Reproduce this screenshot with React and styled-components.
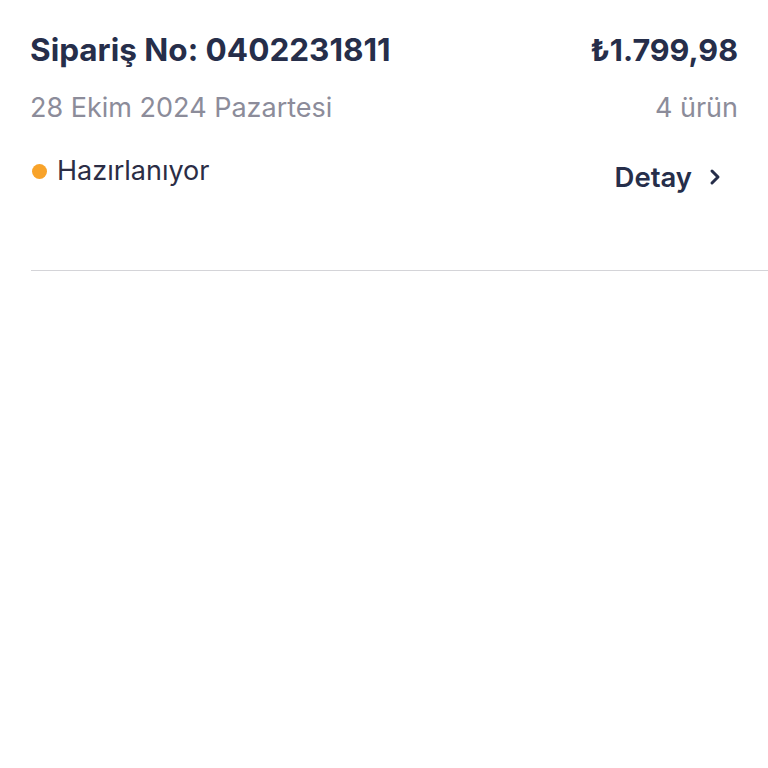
import React from 'react';
import styled, { createGlobalStyle } from 'styled-components';

const GlobalStyle = createGlobalStyle`
  body {
    margin: 0;
    background: #fff;
    font-family: Inter, "Noto Sans", sans-serif;
  }
`;

const Card = styled.div`
  padding: 28px 30px 0 30px;
`;

const Row = styled.div`
  display: flex;
  justify-content: space-between;
  align-items: center;
  margin-top: ${(p) => p.$mt || 0}px;
`;

const Title = styled.div`
  font-size: ${(p) => p.$size || 31.5}px;
  line-height: 44px;
  font-weight: 700;
  color: #262e4a;
`;

const SubText = styled.div`
  font-size: 27px;
  line-height: 36px;
  color: #8c8c9a;
`;

const Status = styled.div`
  display: flex;
  align-items: center;
  gap: 10px;
  font-size: 27px;
  line-height: 36px;
  color: #2b2d45;
`;

const Dot = styled.span`
  width: 15px;
  height: 15px;
  border-radius: 50%;
  background: #f8a32a;
  margin-left: 2px;
`;

const DetailLink = styled.button`
  display: flex;
  align-items: center;
  gap: 16px;
  border: none;
  background: none;
  padding: 0 16px 0 0;
  margin-top: 12px;
  font-family: inherit;
  font-size: 27.5px;
  font-weight: 600;
  color: #262e4a;
  cursor: pointer;
`;

const Divider = styled.hr`
  border: none;
  border-top: 1px solid #d4d4d8;
  margin: 76px -30px 0 1px;
`;

const Chevron = () => (
  <svg width="14" height="18" viewBox="0 0 14 18" fill="none">
    <path d="M4 3l6 6-6 6" stroke="#262e4a" strokeWidth="3" strokeLinecap="round" strokeLinejoin="round" />
  </svg>
);

export default function App() {
  return (
    <>
      <GlobalStyle />
      <Card>
        <Row>
          <Title>Sipariş No: 0402231811</Title>
          <Title $size={30.5}>₺1.799,98</Title>
        </Row>
        <Row $mt={18}>
          <SubText>28 Ekim 2024 Pazartesi</SubText>
          <SubText>4 ürün</SubText>
        </Row>
        <Row $mt={22}>
          <Status>
            <Dot />
            Hazırlanıyor
          </Status>
          <DetailLink>
            Detay
            <Chevron />
          </DetailLink>
        </Row>
        <Divider />
      </Card>
    </>
  );
}
